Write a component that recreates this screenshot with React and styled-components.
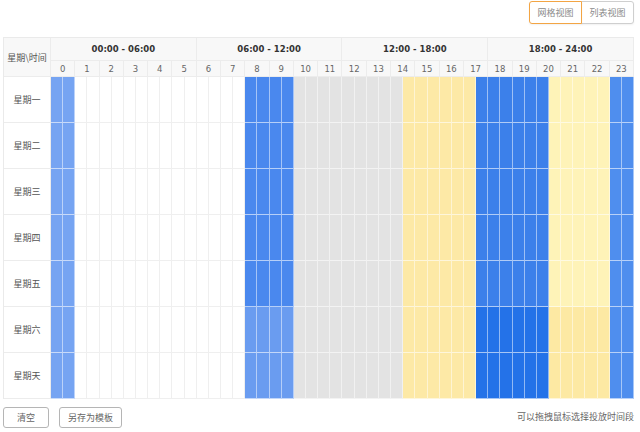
import React from "react";
import styled, { createGlobalStyle } from "styled-components";

const GlobalStyle = createGlobalStyle`
  html, body {
    margin: 0;
    padding: 0;
    background: #fff;
  }
  body {
    font-family: "DejaVu Sans", "Noto Sans CJK SC", sans-serif;
    color: #555;
  }
`;

const Page = styled.div`
  width: 640px;
  height: 432px;
  box-sizing: border-box;
  padding: 1px 6px 0 3px;
  display: flex;
  flex-direction: column;
`;

const TopBar = styled.div`
  display: flex;
  justify-content: flex-end;
  height: 23px;
  margin-bottom: 13px;
`;

const ViewSwitch = styled.div`
  display: flex;
`;

const ViewButton = styled.button`
  width: 53px;
  height: 23px;
  box-sizing: border-box;
  padding: 0;
  background: #fff;
  border: 1px solid ${(p) => (p.active ? "#f3a544" : "#cfcfcf")};
  color: #8a8a8a;
  font-family: "Noto Sans CJK SC", sans-serif;
  font-size: 9px;
  cursor: pointer;
  border-radius: ${(p) => (p.first ? "3px 0 0 3px" : "0 3px 3px 0")};
  margin-left: ${(p) => (p.first ? "0" : "-1px")};
  position: relative;
  z-index: ${(p) => (p.active ? 1 : 0)};
  box-shadow: 0 1px 2px rgba(0, 0, 0, 0.06);
`;

const Grid = styled.div`
  display: grid;
  grid-template-columns: 47px repeat(48, 1fr);
  grid-template-rows: 23px 16px repeat(7, 46px);
  border-top: 1px solid #eaeaea;
  border-left: 1px solid #eaeaea;
  user-select: none;
`;

const HeadCell = styled.div`
  box-sizing: border-box;
  background: #f8f8f8;
  border-right: 1px solid #ececec;
  border-bottom: 1px solid #ececec;
  display: flex;
  align-items: center;
  justify-content: center;
  white-space: nowrap;
  grid-column: ${(p) => p.col};
  grid-row: ${(p) => p.row};
`;

const CornerText = styled.span`
  font-family: "Noto Sans CJK SC", sans-serif;
  font-size: 9px;
  color: #555;
`;

const RangeText = styled.span`
  font-size: 8.5px;
  font-weight: bold;
  color: #333;
`;

const HourText = styled.span`
  font-size: 8.5px;
  color: #666;
`;

const DayCell = styled.div`
  box-sizing: border-box;
  border-right: 1px solid #ececec;
  border-bottom: 1px solid #ececec;
  display: flex;
  align-items: center;
  justify-content: center;
  font-family: "Noto Sans CJK SC", sans-serif;
  font-size: 9px;
  color: #555;
  background: #fff;
`;

const SlotCell = styled.div`
  box-sizing: border-box;
  background: ${(p) => p.color};
  border-right: 1px solid ${(p) => (p.color === "#fff" ? "#efefef" : "rgba(255,255,255,0.5)")};
  border-bottom: 1px solid ${(p) => (p.color === "#fff" ? "#efefef" : "rgba(255,255,255,0.6)")};
`;

const BottomBar = styled.div`
  display: flex;
  align-items: center;
  justify-content: space-between;
  margin-top: 8px;
`;

const Actions = styled.div`
  display: flex;
  gap: 10px;
`;

const ActionButton = styled.button`
  height: 21px;
  box-sizing: border-box;
  padding: 0 ${(p) => p.pad}px;
  background: #fff;
  border: 1px solid #b5b5b5;
  border-radius: 3px;
  color: #666;
  font-family: "Noto Sans CJK SC", sans-serif;
  font-size: 9px;
  cursor: pointer;
`;

const Hint = styled.span`
  font-family: "Noto Sans CJK SC", sans-serif;
  font-size: 9px;
  color: #666;
  margin-top: -2px;
`;

const days = ["星期一", "星期二", "星期三", "星期四", "星期五", "星期六", "星期天"];
const ranges = ["00:00 - 06:00", "06:00 - 12:00", "12:00 - 18:00", "18:00 - 24:00"];

// colour of a half-hour slot (0..47) for a given day
function slotColor(day, slot) {
  const weekend = day >= 5;
  if (slot <= 1) return "#76a4f2";
  if (slot >= 16 && slot <= 19) return weekend ? "#6a9cf0" : "#4a88ee";
  if (slot >= 20 && slot <= 28) return "#e3e3e3";
  if (slot >= 29 && slot <= 34) return "#fde9a6";
  if (slot >= 35 && slot <= 40) return weekend ? "#2472e8" : "#3c80ea";
  if (slot >= 41 && slot <= 45) return weekend ? "#fde9a3" : "#fef3b8";
  if (slot >= 46) return "#4f8eee";
  return "#fff";
}

export default function App() {
  const cells = [];
  days.forEach((d, di) => {
    cells.push(<DayCell key={"d" + di}>{d}</DayCell>);
    for (let s = 0; s < 48; s++) {
      cells.push(<SlotCell key={di + "-" + s} color={slotColor(di, s)} />);
    }
  });

  return (
    <>
      <GlobalStyle />
      <Page>
        <TopBar>
          <ViewSwitch>
            <ViewButton first active>网格视图</ViewButton>
            <ViewButton>列表视图</ViewButton>
          </ViewSwitch>
        </TopBar>
        <Grid>
          <HeadCell col="1" row="1 / 3">
            <CornerText>星期\时间</CornerText>
          </HeadCell>
          {ranges.map((r, i) => (
            <HeadCell key={r} col={`${2 + i * 12} / span 12`} row="1">
              <RangeText>{r}</RangeText>
            </HeadCell>
          ))}
          {Array.from({ length: 24 }, (_, h) => (
            <HeadCell key={"h" + h} col={`${2 + h * 2} / span 2`} row="2">
              <HourText>{h}</HourText>
            </HeadCell>
          ))}
          {cells}
        </Grid>
        <BottomBar>
          <Actions>
            <ActionButton pad={13}>清空</ActionButton>
            <ActionButton pad={8}>另存为模板</ActionButton>
          </Actions>
          <Hint>可以拖拽鼠标选择投放时间段</Hint>
        </BottomBar>
      </Page>
    </>
  );
}
